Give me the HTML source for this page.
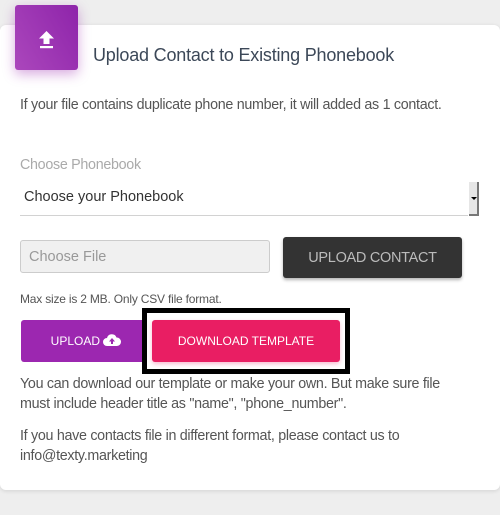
<!DOCTYPE html>
<html><head><style>
body{margin:0;width:500px;height:515px;background:#eeeeee;font-family:"Liberation Sans",sans-serif;position:relative;overflow:hidden}
.a{position:absolute;white-space:nowrap}
.card{position:absolute;left:0;top:25px;width:500px;height:465px;background:#fff;border-radius:6px;box-shadow:0 1px 4px rgba(0,0,0,.12)}
.t{font-size:14.3px;color:#555;letter-spacing:-0.3px}
</style></head><body>
<div class="card"></div>
<div class="a" style="left:15px;top:5px;width:63px;height:65px;border-radius:3px;background:linear-gradient(60deg,#ab47bc,#8e24aa);box-shadow:0 4px 12px rgba(156,39,176,.4)">
<svg width="63" height="65" viewBox="0 0 63 65"><path d="M31.5 26 L39 33.5 L34.5 33.5 L34.5 39 L28.5 39 L28.5 33.5 L24 33.5 Z" fill="#fff"/><rect x="25" y="41" width="13" height="2.2" fill="#fff"/></svg></div>
<div class="a" style="left:93px;top:45px;font-size:18px;color:#3c4858;letter-spacing:-0.2px">Upload Contact to Existing Phonebook</div>
<div class="a t" style="left:20px;top:97px">If your file contains duplicate phone number, it will added as 1 contact.</div>
<div class="a t" style="left:20px;top:157px;color:#aaa">Choose Phonebook</div>
<div class="a" style="left:20px;top:182px;width:448px;height:33px;border-bottom:1px solid #d2d2d2"></div>
<div class="a" style="left:24px;top:189px;font-size:14.5px;color:#333">Choose your Phonebook</div>
<div class="a" style="left:469px;top:182px;width:10px;height:34px;background:#e6e6e6;border-right:2px solid #777;border-bottom:2px solid #777;box-sizing:border-box"></div>
<div class="a" style="left:471px;top:197px;border-left:3px solid transparent;border-right:3px solid transparent;border-top:3px solid #000"></div>
<div class="a" style="left:20px;top:240px;width:250px;height:33px;box-sizing:border-box;background:#f0f0f0;border:1px solid #ccc;border-radius:3px"></div>
<div class="a" style="left:29px;top:249px;font-size:14.5px;color:#999">Choose File</div>
<div class="a" style="left:283px;top:237px;width:179px;height:41px;background:#333;border-radius:3px;box-shadow:0 2px 3px rgba(0,0,0,.3);color:#bbb;font-size:14.5px;text-align:center;line-height:43px;letter-spacing:-0.3px">UPLOAD CONTACT</div>
<div class="a" style="left:20px;top:292px;font-size:12px;color:#555;letter-spacing:-0.2px">Max size is 2 MB. Only CSV file format.</div>
<div class="a" style="left:21px;top:320px;width:130px;height:42px;background:#9c27b0;border-radius:3px;color:#fff;font-size:12px;line-height:42px;text-align:center">UPLOAD <svg width="18" height="12" viewBox="0 0 18 12" style="vertical-align:-1px"><path d="M4 12 A4 4 0 0 1 4 4 A5 5 0 0 1 13.5 3.5 A4 4 0 0 1 14 12 Z" fill="#fff"/><path d="M9 4 L12 7.5 L10 7.5 L10 10 L8 10 L8 7.5 L6 7.5 Z" fill="#9c27b0"/></svg></div>
<div class="a" style="left:142px;top:308px;width:208px;height:66px;box-sizing:border-box;border:5px solid #000;background:#fff"></div>
<div class="a" style="left:152px;top:320px;width:188px;height:42px;background:#e91e63;border-radius:3px;box-shadow:0 2px 4px rgba(233,30,99,.3);color:#fff;font-size:12px;line-height:42px;text-align:center">DOWNLOAD TEMPLATE</div>
<div class="a t" style="left:20px;top:374px;line-height:20px">You can download our template or make your own. But make sure file<br>must include header title as "name", "phone_number".</div>
<div class="a t" style="left:20px;top:426px;line-height:20px">If you have contacts file in different format, please contact us to<br>info@texty.marketing</div>
</body></html>
